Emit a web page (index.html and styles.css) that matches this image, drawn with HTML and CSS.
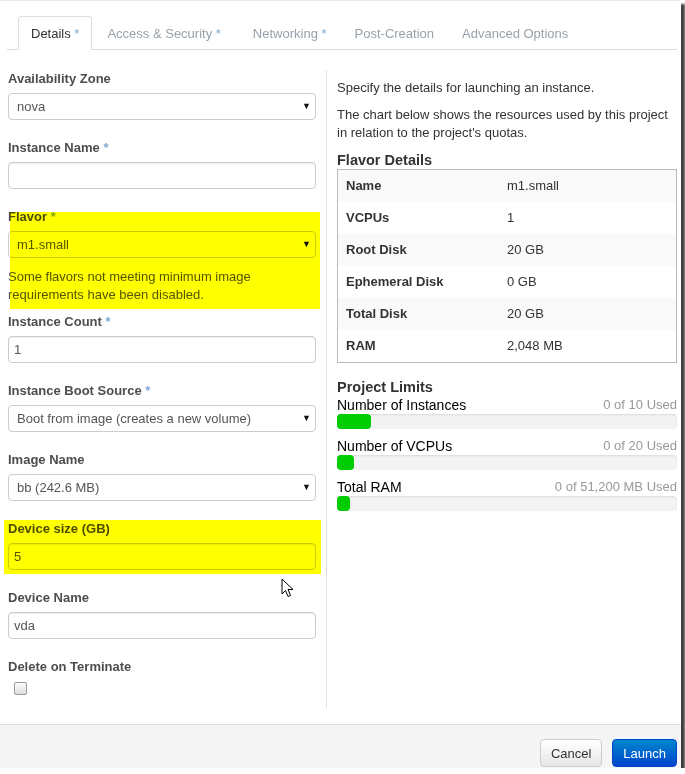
FILE: index.html
```html
<!DOCTYPE html>
<html lang="en">

<head>
    <meta charset="UTF-8" />
    <meta name="viewport" content="width=device-width, initial-scale=1" />
    <title>Launch Instance</title>
    <link rel="stylesheet" href="styles.css">
</head>

<body>
    <div class="modal">
        <div class="modal-body">
            <ul class="tabs">
                <li class="active">Details <span class="req">*</span></li>
                <li class="wide">Access &amp; Security <span class="req">*</span></li>
                <li>Networking <span class="req">*</span></li>
                <li>Post-Creation</li>
                <li>Advanced Options</li>
            </ul>

            <div class="tab-content">
                <div class="form-col">
                    <div class="field">
                        <label>Availability Zone</label>
                        <div class="select"><span>nova</span><span class="caret">&#9660;</span></div>
                    </div>

                    <div class="field">
                        <label>Instance Name <span class="req">*</span></label>
                        <div class="input"></div>
                    </div>

                    <div class="field field-help marked marked-flavor">
                        <label>Flavor <span class="req">*</span></label>
                        <div class="select"><span>m1.small</span><span class="caret">&#9660;</span></div>
                        <p class="help">Some flavors not meeting minimum image requirements have been disabled.</p>
                    </div>

                    <div class="field">
                        <label>Instance Count <span class="req">*</span></label>
                        <div class="input">1</div>
                    </div>

                    <div class="field">
                        <label>Instance Boot Source <span class="req">*</span></label>
                        <div class="select"><span>Boot from image (creates a new volume)</span><span class="caret">&#9660;</span></div>
                    </div>

                    <div class="field">
                        <label>Image Name</label>
                        <div class="select"><span>bb (242.6 MB)</span><span class="caret">&#9660;</span></div>
                    </div>

                    <div class="field marked marked-size">
                        <label>Device size (GB)</label>
                        <div class="input">5</div>
                    </div>

                    <div class="field">
                        <label>Device Name</label>
                        <div class="input">vda</div>
                    </div>

                    <div class="field field-last">
                        <label>Delete on Terminate</label>
                        <span class="checkbox"></span>
                    </div>
                </div>

                <div class="info-col">
                    <p>Specify the details for launching an instance.</p>
                    <p>The chart below shows the resources used by this project in relation to the project's quotas.</p>

                    <h4>Flavor Details</h4>
                    <table class="flavor-table">
                        <tr><th>Name</th><td>m1.small</td></tr>
                        <tr><th>VCPUs</th><td>1</td></tr>
                        <tr><th>Root Disk</th><td>20 GB</td></tr>
                        <tr><th>Ephemeral Disk</th><td>0 GB</td></tr>
                        <tr><th>Total Disk</th><td>20 GB</td></tr>
                        <tr><th>RAM</th><td>2,048 MB</td></tr>
                    </table>

                    <h4 class="limits-title">Project Limits</h4>
                    <div class="quota">
                        <div class="quota-title"><strong>Number of Instances</strong><span>0 of 10 Used</span></div>
                        <div class="bar"><div class="fill" style="width: 34px"></div></div>
                    </div>
                    <div class="quota">
                        <div class="quota-title"><strong>Number of VCPUs</strong><span>0 of 20 Used</span></div>
                        <div class="bar"><div class="fill" style="width: 17px"></div></div>
                    </div>
                    <div class="quota">
                        <div class="quota-title"><strong>Total RAM</strong><span>0 of 51,200 MB Used</span></div>
                        <div class="bar"><div class="fill" style="width: 13px"></div></div>
                    </div>
                </div>
            </div>
        </div>

        <div class="modal-footer">
            <button class="btn">Cancel</button>
            <button class="btn btn-primary">Launch</button>
        </div>

        <svg class="cursor" width="13" height="20" viewBox="0 0 13 20">
            <path d="M1 1 L1 16 L4.5 12.5 L7 18.5 L9.5 17.5 L7 11.5 L12 11.5 Z" fill="#fff" stroke="#000" stroke-width="1" stroke-linejoin="round" />
        </svg>
    </div>
</body>

</html>
```

FILE: styles.css
```css
body {
    margin: 0;
    background-color: #fff;
    font-family: "Liberation Sans", Arial, sans-serif;
    font-size: 13px;
    line-height: 18px;
    color: #333;
}

.modal {
    position: relative;
    width: 681px;
    height: 768px;
    display: flex;
    flex-direction: column;
    background: #fff;
    border-top: 1px solid #e8e8e8;
    box-sizing: border-box;
    box-shadow: 4px 4px 2px rgba(0, 0, 0, 0.75);
}

.modal-body {
    flex: 1;
    padding: 15px 4px 0 7px;
}

.tabs {
    display: flex;
    margin: 0;
    padding: 0 0 0 11px;
    list-style: none;
    border-bottom: 1px solid #ddd;
}

.tabs li {
    margin: 0 2px -1px 0;
    padding: 8px 12px 6px;
    border: 1px solid transparent;
    border-radius: 4px 4px 0 0;
    color: #98a2ac;
}

.tabs li.wide {
    padding-right: 16px;
}

.tabs li.active {
    color: #333;
    background: #fff;
    border-color: #ddd #ddd transparent;
}

.req {
    color: #7fa9cf;
}

.tab-content {
    display: flex;
    margin-top: 20px;
}

.form-col {
    width: 308px;
    padding: 0 10px 13px 1px;
    border-right: 1px solid #e2e2e2;
}

.field {
    position: relative;
    margin-bottom: 19px;
}

.field label {
    display: block;
    margin-bottom: 5px;
    font-weight: bold;
    color: #4d4d4d;
}

.field-help {
    margin-bottom: 9px;
}

.field-last {
    margin-bottom: 0;
}

.select,
.input {
    height: 27px;
    box-sizing: border-box;
    border: 1px solid #ccc;
    border-radius: 4px;
    color: #555;
    line-height: 25px;
}

.select {
    display: flex;
    justify-content: space-between;
    padding: 0 4px 0 8px;
    background: #fff;
}

.input {
    padding: 0 5px;
    background: #fff;
    box-shadow: inset 0 1px 1px rgba(0, 0, 0, 0.075);
}

.caret {
    font-size: 9px;
    color: #111;
}

.help {
    margin: 10px 0 0;
    color: #555;
}

.checkbox {
    display: block;
    width: 11px;
    height: 11px;
    margin: 6px 0 0 6px;
    border: 1px solid #999;
    border-radius: 2px;
    background: linear-gradient(#fdfdfd, #dedede);
}

/* highlighter marks drawn over the form */
.marked::after {
    content: "";
    position: absolute;
    background: #ffff00;
    mix-blend-mode: multiply;
    pointer-events: none;
}

.marked-flavor::after {
    top: 4px;
    right: -4px;
    bottom: -5px;
    left: 2px;
}

.marked-size::after {
    top: 0;
    right: -5px;
    bottom: -4px;
    left: -4px;
}

.info-col {
    flex: 1;
    padding: 9px 0 0 10px;
}

.info-col p {
    margin: 0 0 9px;
}

.info-col h4 {
    margin: 0;
    font-size: 14.5px;
    line-height: 18px;
    color: #333;
}

.flavor-table {
    width: 100%;
    border-collapse: collapse;
    border: 1px solid #bbb;
}

.flavor-table th,
.flavor-table td {
    width: 50%;
    padding: 7px 8px;
    text-align: left;
}

.flavor-table td {
    padding-left: 0;
}

.flavor-table tr:nth-child(odd) {
    background: #f9f9f9;
}

.limits-title {
    margin-top: 15px !important;
}

.quota {
    margin-bottom: 8px;
}

.quota-title {
    display: flex;
    justify-content: space-between;
}

.quota-title strong {
    font-weight: normal;
    font-size: 14px;
    color: #000;
}

.quota-title span {
    color: #999;
}

.bar {
    height: 15px;
    background: #f3f3f3;
    border-radius: 4px;
    box-shadow: inset 0 1px 2px rgba(0, 0, 0, 0.1);
}

.fill {
    height: 100%;
    background: #00cc00;
    border-radius: 4px;
}

.modal-footer {
    display: flex;
    justify-content: flex-end;
    gap: 10px;
    height: 44px;
    box-sizing: border-box;
    padding: 14px 4px 0 0;
    background: #f5f5f5;
    border-top: 1px solid #ddd;
}

.btn {
    height: 28px;
    padding: 0 10px;
    font-family: inherit;
    font-size: 13px;
    color: #333;
    border: 1px solid #ccc;
    border-radius: 4px;
    background: linear-gradient(#fff, #e6e6e6);
    cursor: pointer;
}

.btn-primary {
    color: #fff;
    border-color: #0044cc;
    background: linear-gradient(#0088cc, #0044cc);
}

.cursor {
    position: absolute;
    left: 281px;
    top: 577px;
}
```
